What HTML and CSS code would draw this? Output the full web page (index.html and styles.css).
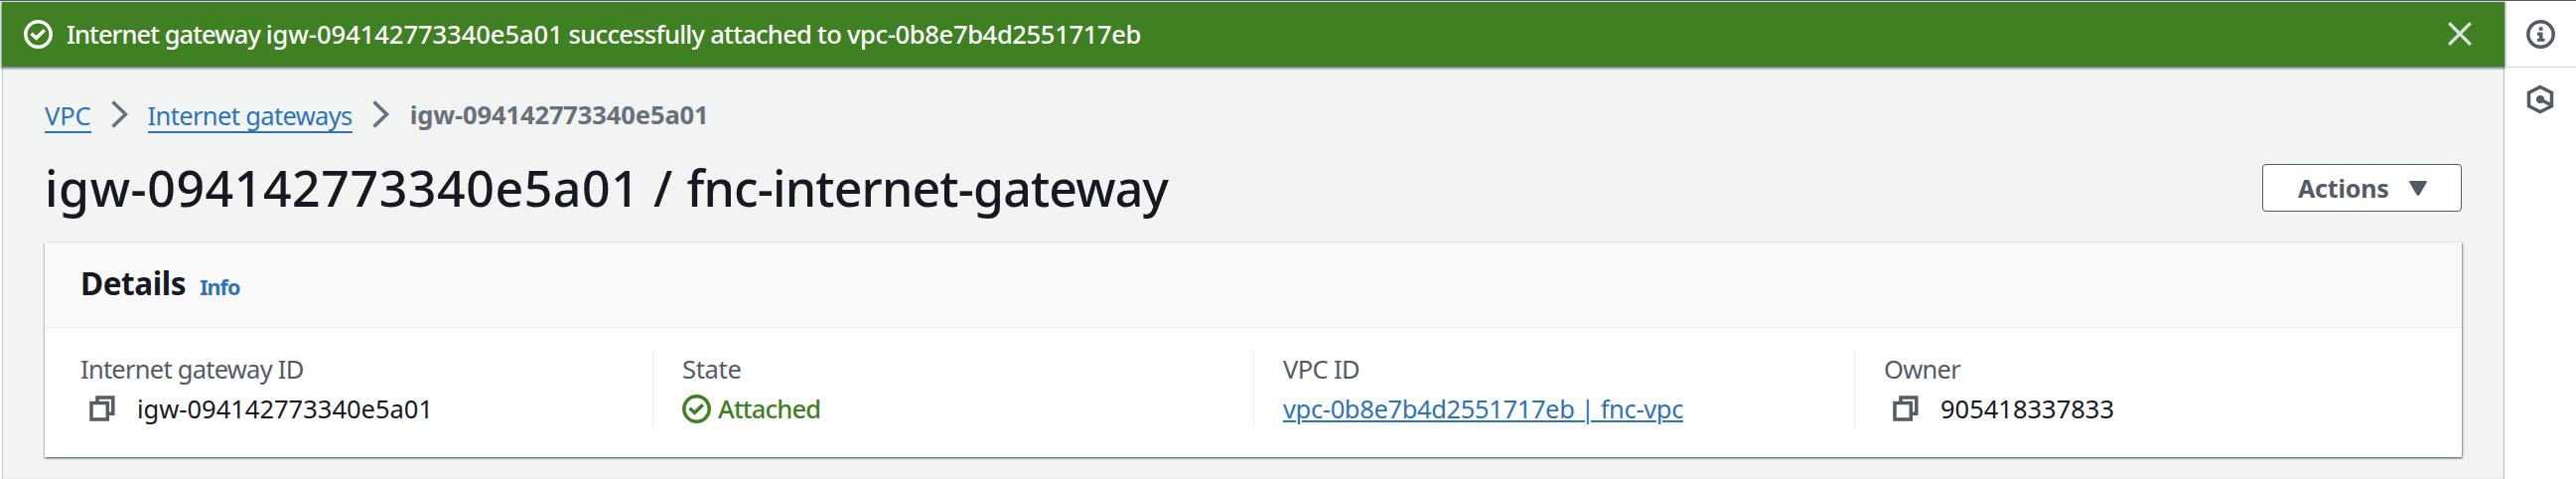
FILE: index.html
```html
<!DOCTYPE html>
<html lang="en">
<head>
<meta charset="utf-8">
<title>Internet gateway details</title>
<link rel="stylesheet" href="styles.css">
</head>
<body>
<div class="app">
  <main class="main">
    <div class="flash">
      <svg class="flash-icon" width="29" height="29" viewBox="0 0 29 29"><circle cx="14.5" cy="14.5" r="12.7"/><path d="M7.500 13.800l5 4.500 8.300-8"/></svg>
      <span class="flash-text"><span class="flash-lead">Internet gateway </span><span class="flash-id">igw-094142773340e5a01</span><span class="flash-mid"> successfully attached to </span><span class="flash-vpc">vpc-0b8e7b4d2551717eb</span></span>
      <svg class="flash-close" width="24" height="24" viewBox="0 0 24 24"><path d="M1.2 1.2l21.6 21.6M22.8 1.2L1.2 22.8"/></svg>
    </div>
    <div class="content">
      <nav class="crumbs">
        <a class="crumb crumb-vpc">VPC</a>
        <svg class="chevron" width="17" height="28" viewBox="0 0 17 28"><path d="M1.5 1.5L14.5 14 1.5 26.5"/></svg>
        <a class="crumb crumb-igw">Internet gateways</a>
        <svg class="chevron" width="17" height="28" viewBox="0 0 17 28"><path d="M1.5 1.5L14.5 14 1.5 26.5"/></svg>
        <span class="crumb-current">igw-094142773340e5a01</span>
      </nav>
      <header class="heading">
        <h1 class="title"><span class="title-id">igw-094142773340e5a01</span><span class="title-sep"> / </span><span class="title-name">fnc-internet-gateway</span></h1>
        <button class="actions"><span class="actions-text">Actions</span><svg width="18" height="15" viewBox="0 0 18 15"><path d="M1 0h16q1.400.2.700 1.500L10.500 14q-1.500 1.500-3 0L.3 1.500Q-.4.200 1 0z" class="caret"/></svg></button>
      </header>
      <section class="card">
        <div class="card-head"><h2 class="card-title">Details</h2><a class="info">Info</a></div>
        <div class="fields">
          <div class="field">
            <div class="label label-id">Internet gateway ID</div>
            <div class="value"><svg class="copy" width="26" height="26" viewBox="0 0 26 26"><path d="M8 6.500V2h15.800v16.200H19M2 7.500h16.300V24H2z"/></svg><span class="text-id">igw-094142773340e5a01</span></div>
          </div>
          <div class="field">
            <div class="label label-state">State</div>
            <div class="value attached"><svg class="ok" width="29" height="29" viewBox="0 0 29 29"><circle cx="14.5" cy="14.5" r="12.7"/><path d="M7.500 13.800l5 4.500 8.300-8"/></svg><span class="text-state">Attached</span></div>
          </div>
          <div class="field">
            <div class="label label-vpc">VPC ID</div>
            <div class="value"><a class="link">vpc-0b8e7b4d2551717eb | fnc-vpc</a></div>
          </div>
          <div class="field">
            <div class="label label-owner">Owner</div>
            <div class="value"><svg class="copy" width="26" height="26" viewBox="0 0 26 26"><path d="M8 6.500V2h15.800v16.200H19M2 7.500h16.300V24H2z"/></svg><span class="text-owner">905418337833</span></div>
          </div>
        </div>
      </section>
    </div>
  </main>
  <aside class="rail">
    <div class="rail-item rail-first"><svg width="29" height="29" viewBox="0 0 29 29"><circle cx="14.5" cy="14.5" r="12.7"/><path class="solid" d="M12.800 7.200h3.700v3.600h-3.700zM11 12.600h5.500v6.100h2v3H11v-3h1.900v-3H11z"/></svg></div>
    <div class="rail-item"><svg width="28" height="30" viewBox="0 0 28 30"><path d="M14 2.500l11.500 5.800v13.400L14 27.500 2.500 21.700V8.300zM14 15l10.500 5.500"/><circle class="solid" cx="14" cy="15" r="4"/></svg></div>
  </aside>
</div>
</body>
</html>
```
FILE: styles.css
```css
* { box-sizing: border-box; }
body { margin: 0; background: #fff; font-family: "Noto Sans", "Open Sans", sans-serif; font-size: 25.5px; color: #16191f; }
svg { display: block; flex: none; fill: none; stroke: currentColor; stroke-width: 3.5; }
.solid, .caret { fill: currentColor; stroke: none; }
.app { display: flex; height: 482px; padding-left: 2px; border-top: 1px solid #545b64; overflow: hidden; white-space: nowrap; }
.main { flex: none; width: 2520px; margin-top: 1px; background: #f2f3f3; border-left: 1px solid #c3c9c9; box-shadow: inset -1px 0 1px #b4bbbb; }
.flash { display: flex; align-items: center; height: 65px; margin-left: -1px; padding: 0 33px 0 22px; background: #3f8023; color: #fff; box-shadow: 0 1px 2px 1px rgba(0,28,36,.5); font-weight: 500; }
.flash-text { margin: -1px 0 0 14px; }
.flash-lead { letter-spacing: -.95px; }
.flash-id { letter-spacing: -.02px; }
.flash-mid { letter-spacing: -.71px; }
.flash-vpc { letter-spacing: -.33px; }
.flash-close { margin: -2px 0 0 auto; color: #dce3da; stroke-width: 3.3; }
.content { padding: 26px 42px 0; }
.crumbs { display: flex; align-items: center; height: 44px; color: #687078; }
.crumb { color: #2e73b8; line-height: 31px; border-bottom: 2px solid #2e73b8; margin-top: 4px; }
.crumb-vpc { letter-spacing: -.1px; }
.crumb-igw { margin-left: 1px; letter-spacing: -.65px; }
.chevron { margin: 0 19px 0 20px; stroke-width: 3.5; }
.crumb-current { margin-left: 2px; font-weight: 700; letter-spacing: -.1px; }
.heading { display: flex; justify-content: space-between; align-items: center; height: 107px; }
.title { margin: -4px 0 0 0; font-size: 50px; font-weight: 500; white-space: pre; }
.title-id { letter-spacing: .58px; }
.title-sep { letter-spacing: .6px; }
.title-name { letter-spacing: -.8px; }
.actions { display: flex; align-items: center; justify-content: space-between; width: 201px; height: 48px; margin: -3px 1px 0 0; padding: 0 34px 0 35px; border: 1px solid #545b64; border-radius: 4px; background: #fff; color: #545b64; font: 700 25px "Noto Sans", sans-serif; }
.actions-text { letter-spacing: -.2px; margin-top: -1px; }
.card { height: 216px; margin-right: 1px; background: #fff; box-shadow: 0 1px 2px rgba(0,28,36,.6), 1px 1px 2px rgba(0,28,36,.3); }
.card-head { display: flex; align-items: baseline; height: 86px; padding: 19px 36px 0; background: #fafafa; border-bottom: 1px solid #e7eaea; }
.card-title { margin: 0; font-size: 31.5px; font-weight: 700; line-height: 44px; letter-spacing: -.4px; }
.info { margin-left: 14px; font-size: 21.5px; font-weight: 700; letter-spacing: -1px; color: #2e73b8; }
.fields { display: grid; grid-template-columns: 612px 605px 605px 1fr; padding-top: 22px; }
.field { height: 79px; padding-left: 29px; border-left: 1px solid #eaeded; }
.field:first-child { padding-left: 36px; border-left: 0; }
.label { line-height: 39px; height: 40px; color: #545b64; }
.label-id { letter-spacing: -.75px; }
.label-state { letter-spacing: -.3px; }
.label-vpc { letter-spacing: -.6px; }
.label-owner { letter-spacing: -.7px; }
.value { display: flex; align-items: center; height: 38px; }
.copy { margin: 0 22px 0 9px; color: #545b64; }
.ok { margin: 0 7px 0 0; }
.attached { color: #3f8023; }
.text-id { letter-spacing: 0; }
.text-state { font-weight: 500; letter-spacing: -.8px; }
.link { color: #2e73b8; letter-spacing: -.36px; text-decoration: underline; text-decoration-thickness: 2px; text-underline-offset: 2px; }
.rail { flex: 1; color: #545b64; padding-top: 1px; }
.rail-item { display: flex; align-items: center; justify-content: center; height: 66px; }
.rail-item + .rail-item { height: 64px; }
.rail-first { border-bottom: 1px solid #d5dbdb; }
```
